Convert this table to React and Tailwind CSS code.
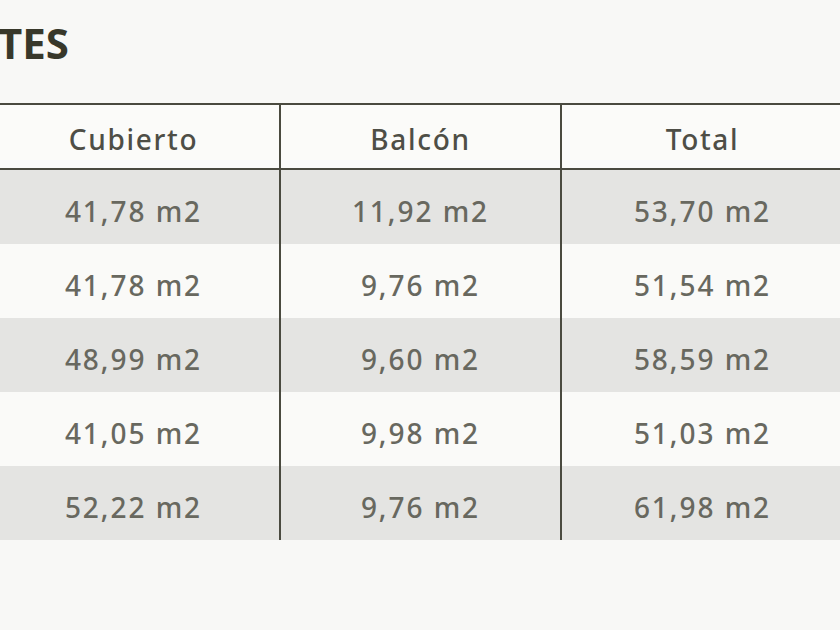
import React from 'react';

const rows = [
  ['41,78 m2', '11,92 m2', '53,70 m2'],
  ['41,78 m2', '9,76 m2', '51,54 m2'],
  ['48,99 m2', '9,60 m2', '58,59 m2'],
  ['41,05 m2', '9,98 m2', '51,03 m2'],
  ['52,22 m2', '9,76 m2', '61,98 m2'],
];

const cols = ['w-[293px] border-r-2', 'w-[281px] border-r-2', 'w-[281px]'];

export default function App() {
  return (
    <div className="h-[630px] w-[840px] overflow-hidden bg-[#f8f8f6] font-['Noto_Sans',sans-serif]">
      {/* Title */}
      <h1 className="-ml-[2px] pt-[18px] text-[42px] font-bold leading-[50px] text-[#38382a]">
        TES
      </h1>

      {/* Table */}
      <div className="mt-[35px] -ml-[12px] w-[870px]">
        <div className="flex h-[67px] border-y-2 border-[#4a4a3f] bg-[#fbfbf9]">
          {['Cubierto', 'Balcón', 'Total'].map((h, i) => (
            <div
              key={h}
              className={`${cols[i]} flex items-center justify-center border-[#4a4a3f] pt-[5px] text-[28px] font-medium tracking-[0.06em] text-[#4e4e46]`}
            >
              {h}
            </div>
          ))}
        </div>
        {rows.map((r, ri) => (
          <div
            key={ri}
            className={`flex h-[74px] ${ri % 2 === 0 ? 'bg-[#e4e4e2]' : 'bg-[#fafaf8]'}`}
          >
            {r.map((v, i) => (
              <div
                key={i}
                className={`${cols[i]} flex items-center justify-center border-[#4a4a3f] pt-[7px] text-[28px] font-medium tracking-[0.07em] text-[#68685f]`}
              >
                {v}
              </div>
            ))}
          </div>
        ))}
      </div>
    </div>
  );
}
